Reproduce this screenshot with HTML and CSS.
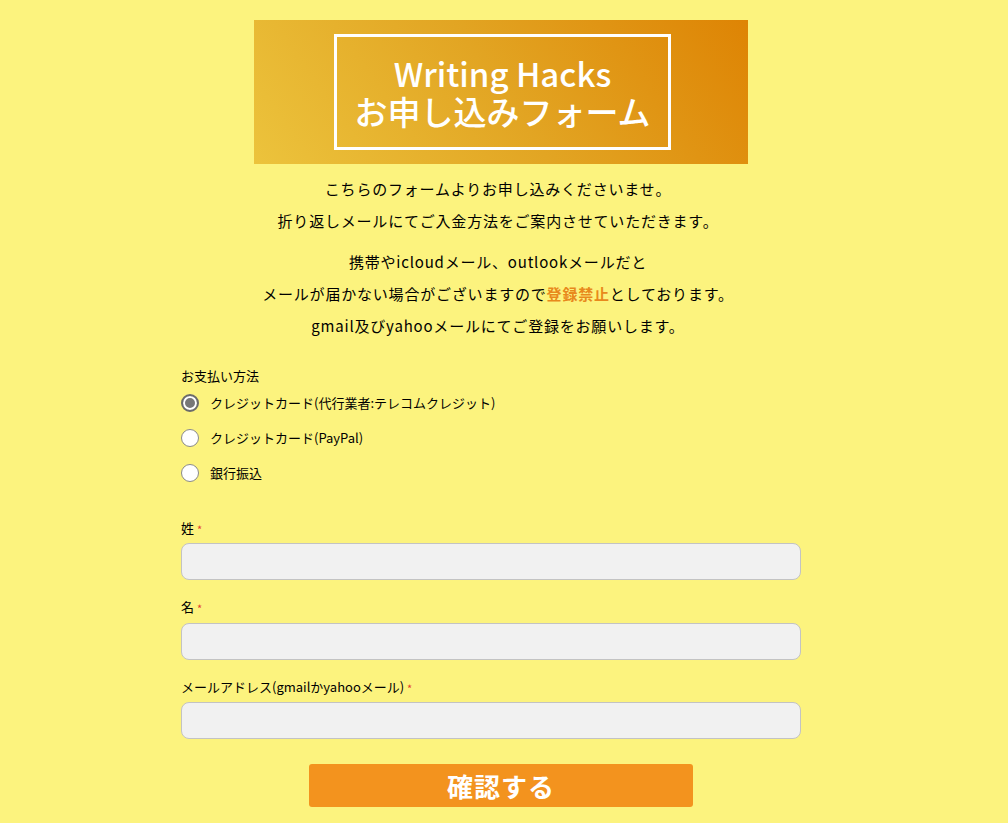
FILE: index.html
```html
<!DOCTYPE html>
<html lang="ja">
<head>
    <meta charset="UTF-8">
    <meta name="viewport" content="width=device-width, initial-scale=1.0">
    <title>Writing Hacks お申し込みフォーム</title>
    <link rel="stylesheet" href="styles.css">
</head>
<body>

<div class="page">
    <header class="banner">
        <div class="banner-box">
            <h1>Writing Hacks<br>お申し込みフォーム</h1>
        </div>
    </header>

    <div class="intro">
        <p>こちらのフォームよりお申し込みくださいませ。<br>折り返しメールにてご入金方法をご案内させていただきます。</p>
        <p>携帯やicloudメール、outlookメールだと<br>メールが届かない場合がございますので<span class="warn">登録禁止</span>としております。<br>gmail及びyahooメールにてご登録をお願いします。</p>
    </div>

    <form class="entry-form" onsubmit="return false">
        <div class="field pay-field">
            <div class="field-label">お支払い方法</div>
            <label class="radio-row"><input type="radio" name="pay" checked> クレジットカード(代行業者:テレコムクレジット)</label>
            <label class="radio-row"><input type="radio" name="pay"> クレジットカード(PayPal)</label>
            <label class="radio-row"><input type="radio" name="pay"> 銀行振込</label>
        </div>

        <div class="field text-field">
            <label class="field-label" for="last-name">姓 <span class="req">*</span></label>
            <input type="text" id="last-name">
        </div>

        <div class="field text-field">
            <label class="field-label" for="first-name">名 <span class="req">*</span></label>
            <input type="text" id="first-name">
        </div>

        <div class="field text-field">
            <label class="field-label" for="email">メールアドレス(gmailかyahooメール) <span class="req">*</span></label>
            <input type="email" id="email">
        </div>

        <button type="submit" class="submit">確認する</button>
    </form>
</div>

</body>
</html>
```

FILE: styles.css
```css
body {
    margin: 0;
    padding: 0;
    background-color: #fcf37e;
    font-family: "Noto Sans CJK JP", "Noto Sans", sans-serif;
    color: #000;
}
.page {
    width: 620px;
    margin-left: 181px;
    padding-top: 20px;
}
.banner {
    width: 494px;
    height: 144px;
    margin-left: 73px;
    background: linear-gradient(55deg, #ecc33c 0%, #e2a523 50%, #de8404 100%);
    display: flex;
    align-items: center;
    justify-content: center;
}
.banner-box {
    border: 3px solid #fff;
    padding: 17px 17px;
    width: 337px;
    box-sizing: border-box;
    margin-left: 3px;
}
.banner h1 {
    margin: 0;
    color: #fff;
    font-size: 33px;
    font-weight: 500;
    line-height: 38px;
    text-align: center;
    white-space: nowrap;
}
.intro {
    width: 634px;
    text-align: center;
    margin-top: 9px;
}
.intro p {
    margin: 0 0 9px;
    font-size: 15px;
    font-weight: 400;
    line-height: 32px;
    letter-spacing: 0.8px;
}
.warn {
    color: #e8891c;
    font-weight: 700;
}
.entry-form {
    margin-top: 25px;
}
.field {
    margin-bottom: 26px;
}
.pay-field {
    margin-bottom: 29px;
}
.field-label {
    display: block;
    font-size: 13px;
    font-weight: 400;
    line-height: 18px;
    margin-bottom: 8px;
}
.radio-row {
    display: flex;
    align-items: center;
    gap: 11px;
    font-size: 13px;
    font-weight: 400;
    height: 35px;
    margin-top: -8px;
    margin-bottom: 8px;
}
.radio-row input {
    appearance: none;
    width: 18px;
    height: 18px;
    margin: 0;
    border: 1px solid #8a8a8a;
    border-radius: 50%;
    background: #fff;
}
.radio-row input:checked {
    border: 2px solid #6b6b6b;
    box-shadow: inset 0 0 0 2px #fff, inset 0 0 0 9px #777;
}
.text-field {
    margin-bottom: 18px;
}
.text-field .field-label {
    margin-bottom: 5px;
}
.req {
    color: #e53b2c;
    font-size: 11px;
    vertical-align: middle;
}
.text-field input {
    display: block;
    width: 100%;
    height: 37px;
    box-sizing: border-box;
    border: 1px solid #c3c3c3;
    border-radius: 8px;
    background: #f1f1f1;
    padding: 6px 10px;
    font-size: 14px;
    font-family: inherit;
}
.submit {
    display: block;
    width: 384px;
    height: 43px;
    margin: 25px 0 0 128px;
    border: none;
    border-radius: 3px;
    background-color: #f3931e;
    color: #fff;
    font-family: inherit;
    font-size: 26px;
    font-weight: 700;
    letter-spacing: 1px;
    cursor: pointer;
}
```
